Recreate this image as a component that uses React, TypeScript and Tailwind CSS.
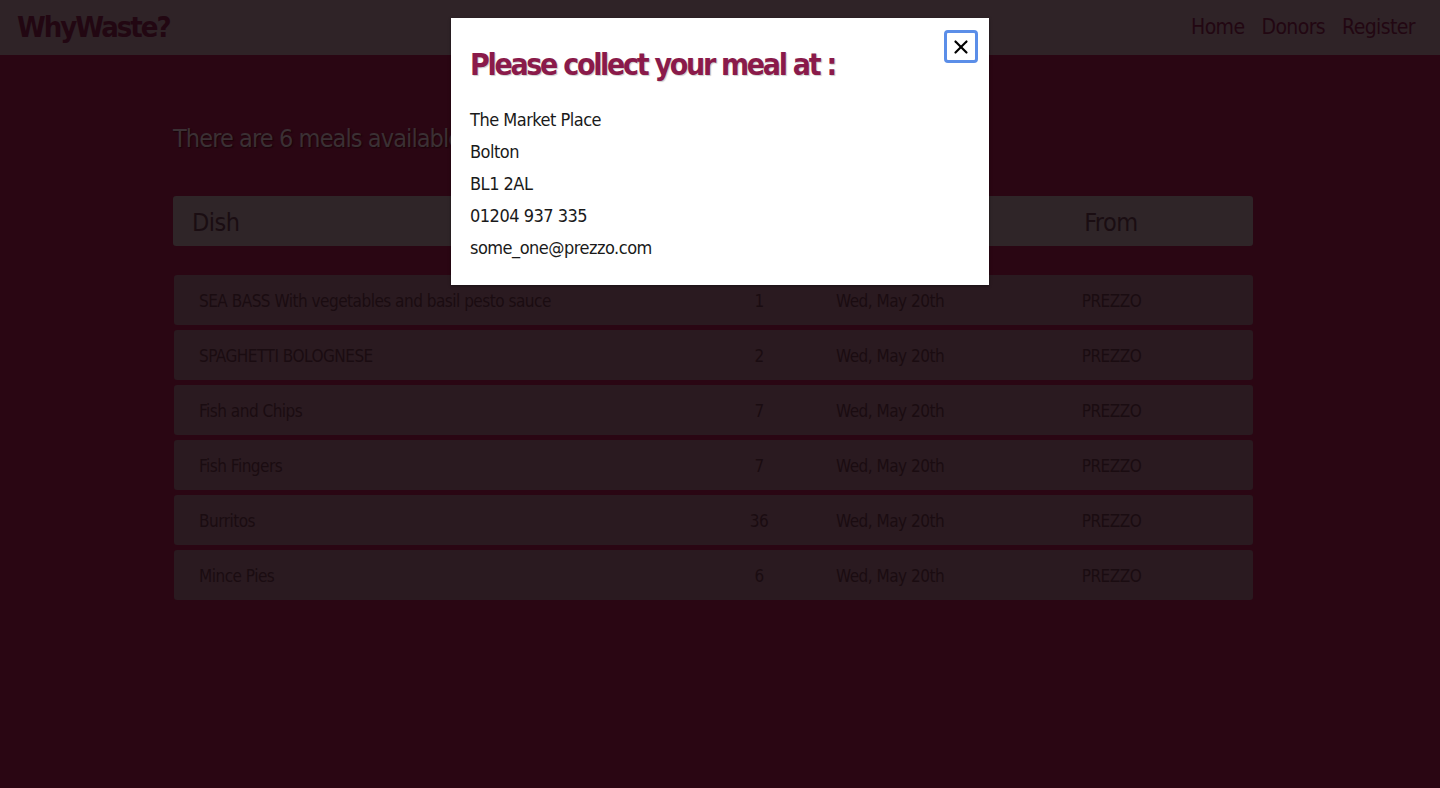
import { X } from "lucide-react";

const meals = [
  { dish: "SEA BASS With vegetables and basil pesto sauce", qty: "1", date: "Wed, May 20th", from: "PREZZO" },
  { dish: "SPAGHETTI BOLOGNESE", qty: "2", date: "Wed, May 20th", from: "PREZZO" },
  { dish: "Fish and Chips", qty: "7", date: "Wed, May 20th", from: "PREZZO" },
  { dish: "Fish Fingers", qty: "7", date: "Wed, May 20th", from: "PREZZO" },
  { dish: "Burritos", qty: "36", date: "Wed, May 20th", from: "PREZZO" },
  { dish: "Mince Pies", qty: "6", date: "Wed, May 20th", from: "PREZZO" },
];

const font = "font-['DejaVu_Sans',sans-serif] [font-stretch:condensed]";

export default function App() {
  return (
    <div className={`relative min-h-[788px] bg-[#2a0613] ${font}`}>
      <nav className="flex h-[55px] items-center justify-between bg-[#2f2327] pl-[17px] pr-[25px]">
        <span className="text-[29px] font-bold tracking-[-2px] text-[#220712]">WhyWaste?</span>
        <div className="flex gap-[17px] text-[21px] tracking-[-0.6px] text-[#220712]">
          <span>Home</span>
          <span>Donors</span>
          <span>Register</span>
        </div>
      </nav>

      <main className="ml-[173px] w-[1080px] pt-[66px]">
        <h2 className="text-[25px] leading-[36px] tracking-[-0.9px] text-[#3b3034] [text-shadow:1px_1px_1px_#1a0409]">
          There are 6 meals available
        </h2>

        <div className="mt-[39px] flex h-[50px] items-center rounded-[3px] bg-[#2f2528] pt-[3px] text-[25px] tracking-[-0.5px] text-[#1a0d12]">
          <div className="w-[530px] pl-[19px]">Dish</div>
          <div className="w-[110px]" />
          <div className="w-[156px]" />
          <div className="flex-1 text-center">From</div>
        </div>

        <div className="mt-[29px] flex flex-col gap-[5px] pl-px">
          {meals.map((m, i) => (
            <div key={i} className="flex h-[50px] items-center rounded-[3px] bg-[#2a1a20] pt-[3px] text-[17px] tracking-[-0.5px] text-[#1a0c11]">
              <div className="w-[530px] pl-[25px]">{m.dish}</div>
              <div className="w-[110px] text-center">{m.qty}</div>
              <div className="w-[156px] pl-[22px]">{m.date}</div>
              <div className="flex-1 text-center">{m.from}</div>
            </div>
          ))}
        </div>
      </main>

      <div className="absolute left-[451px] top-[18px] h-[267px] w-[538px] bg-white px-[19px] pt-[24px] shadow-[0_1px_3px_rgba(0,0,0,0.4)]">
        <button className="absolute right-[11px] top-[12px] flex h-[33px] w-[34px] items-center justify-center rounded-[4px] border-[3px] border-[#5b8ee8] bg-white">
          <X className="h-[22px] w-[22px] text-black" strokeWidth={2.4} />
        </button>
        <h1 className="text-[30px] font-bold tracking-[-2.3px] text-[#8a1a4a] [text-shadow:1px_1px_1px_rgba(0,0,0,0.2)]">
          Please collect your meal at :
        </h1>
        <div className="mt-[20px] flex flex-col gap-[6px] text-[18px] leading-[26px] tracking-[-0.5px] text-[#1a1a1a]">
          <span>The Market Place</span>
          <span>Bolton</span>
          <span>BL1 2AL</span>
          <span>01204 937 335</span>
          <span>some_one@prezzo.com</span>
        </div>
      </div>
    </div>
  );
}
